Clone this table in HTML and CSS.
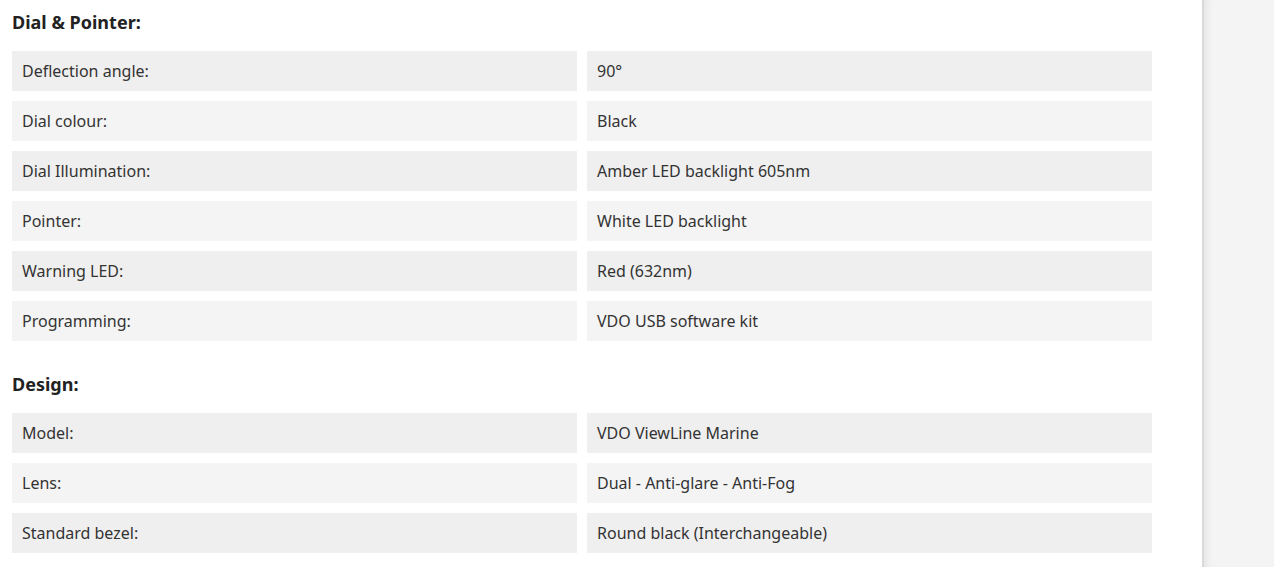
FILE: index.html
```html
<!DOCTYPE html>
<html lang="en">
<head>
<meta charset="utf-8">
<title>Specifications</title>
<link rel="stylesheet" href="styles.css">
</head>
<body>
<div class="page">
  <main class="content">
    <section class="spec">
      <h3 class="spec-title">Dial &amp; Pointer:</h3>
      <div class="spec-grid">
        <div class="cell odd">Deflection angle:</div><div class="cell odd">90°</div>
        <div class="cell even">Dial colour:</div><div class="cell even">Black</div>
        <div class="cell odd">Dial Illumination:</div><div class="cell odd">Amber LED backlight 605nm</div>
        <div class="cell even">Pointer:</div><div class="cell even">White LED backlight</div>
        <div class="cell odd">Warning LED:</div><div class="cell odd">Red (632nm)</div>
        <div class="cell even">Programming:</div><div class="cell even">VDO USB software kit</div>
      </div>
    </section>
    <section class="spec spec-next">
      <h3 class="spec-title">Design:</h3>
      <div class="spec-grid">
        <div class="cell odd">Model:</div><div class="cell odd">VDO ViewLine Marine</div>
        <div class="cell even">Lens:</div><div class="cell even">Dual - Anti-glare - Anti-Fog</div>
        <div class="cell odd">Standard bezel:</div><div class="cell odd">Round black (Interchangeable)</div>
      </div>
    </section>
  </main>
  <aside class="sidebar"></aside>
</div>
</body>
</html>
```
FILE: styles.css
```css
html, body {
  margin: 0;
  padding: 0;
  background: #ffffff;
}
body {
  font-family: "Noto Sans", "Open Sans", "Liberation Sans", sans-serif;
  color: #333333;
}
.page {
  display: flex;
  min-height: 567px;
}
.content {
  width: 1202px;
  flex: 0 0 1202px;
  padding: 10px 0 0 12px;
  box-sizing: border-box;
  background: #ffffff;
}
.spec-next {
  margin-top: 31px;
}
.spec-title {
  margin: 0 0 17px;
  font-size: 18px;
  line-height: 24px;
  font-weight: 700;
  color: #222222;
}
.spec-grid {
  display: grid;
  grid-template-columns: 565px 565px;
  grid-auto-rows: 40px;
  gap: 10px;
}
.cell {
  display: flex;
  align-items: center;
  padding: 0 10px;
  font-size: 16px;
  color: #333333;
}
.odd {
  background: #efefef;
}
.even {
  background: #f4f4f4;
}
.sidebar {
  flex: 1;
  background: #f4f4f4;
  border-left: 2px solid #d9d9d9;
  box-shadow: inset 8px 0 8px -6px rgba(0, 0, 0, 0.08);
}
```
